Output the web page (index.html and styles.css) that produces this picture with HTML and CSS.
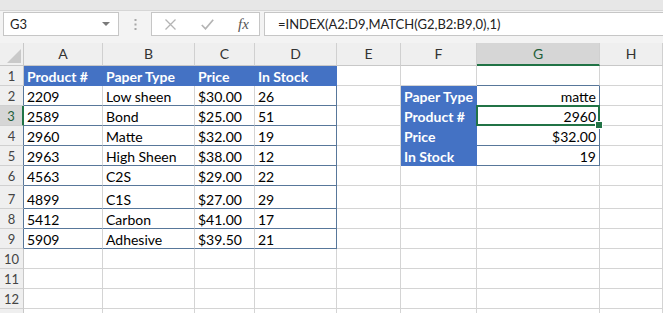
FILE: index.html
```html
<!DOCTYPE html>
<html lang="en">
<head>
    <meta charset="UTF-8">
    <title>INDEX MATCH lookup</title>
    <link rel="stylesheet" href="styles.css">
</head>
<body>
    <div class="ribbon-edge"></div>
    <div class="formula-bar">
        <div class="name-box"><span>G3</span><span class="caret"></span></div>
        <svg class="grip" width="3" height="11" viewBox="0 0 3 11">
            <rect x="0.5" y="0" width="2" height="2" fill="#a8a8a8"/>
            <rect x="0.5" y="4.5" width="2" height="2" fill="#a8a8a8"/>
            <rect x="0.5" y="9" width="2" height="2" fill="#a8a8a8"/>
        </svg>
        <div class="fx-box">
            <svg class="icon-x" width="11" height="11" viewBox="0 0 11 11">
                <path d="M0.5 0.5 L10.5 10.5 M10.5 0.5 L0.5 10.5" stroke="#b4b4b4" stroke-width="1.3" fill="none"/>
            </svg>
            <svg class="icon-ok" width="13" height="11" viewBox="0 0 13 11">
                <path d="M0.8 6 L4.5 9.8 L12.2 0.8" stroke="#b4b4b4" stroke-width="1.7" fill="none"/>
            </svg>
            <span class="fx">fx</span>
        </div>
        <div class="formula">=INDEX(A2:D9,MATCH(G2,B2:B9,0),1)</div>
    </div>

    <div class="sheet">
        <div class="corner">
            <svg width="14" height="14" viewBox="0 0 14 14"><path d="M14 0 L14 14 L0 14 Z" fill="#c9c9c9"/></svg>
        </div>
        <div class="ch">A</div><div class="ch">B</div><div class="ch">C</div><div class="ch">D</div>
        <div class="ch">E</div><div class="ch">F</div><div class="ch sel">G</div><div class="ch">H</div>

        <div class="rh">1</div>
        <div class="c th">Product #</div><div class="c th">Paper Type</div><div class="c th">Price</div><div class="c th">In Stock</div>
        <div class="c"></div><div class="c"></div><div class="c above"></div><div class="c"></div>

        <div class="rh edge">2</div>
        <div class="c tb">2209</div><div class="c tb">Low sheen</div><div class="c tb">$30.00</div><div class="c tb last">26</div>
        <div class="c"></div><div class="c lk">Paper Type</div><div class="c lv">matte</div><div class="c"></div>

        <div class="rh edge sel">3</div>
        <div class="c tb">2589</div><div class="c tb">Bond</div><div class="c tb">$25.00</div><div class="c tb last">51</div>
        <div class="c"></div><div class="c lk">Product #</div><div class="c lv active">2960</div><div class="c"></div>

        <div class="rh edge">4</div>
        <div class="c tb">2960</div><div class="c tb">Matte</div><div class="c tb">$32.00</div><div class="c tb last">19</div>
        <div class="c"></div><div class="c lk">Price</div><div class="c lv">$32.00</div><div class="c"></div>

        <div class="rh edge">5</div>
        <div class="c tb">2963</div><div class="c tb">High Sheen</div><div class="c tb">$38.00</div><div class="c tb last">12</div>
        <div class="c"></div><div class="c lk">In Stock</div><div class="c lv">19</div><div class="c"></div>

        <div class="rh edge">6</div>
        <div class="c tb">4563</div><div class="c tb">C2S</div><div class="c tb">$29.00</div><div class="c tb last">22</div>
        <div class="c"></div><div class="c"></div><div class="c"></div><div class="c"></div>

        <div class="rh edge">7</div>
        <div class="c tb">4899</div><div class="c tb">C1S</div><div class="c tb">$27.00</div><div class="c tb last">29</div>
        <div class="c"></div><div class="c"></div><div class="c"></div><div class="c"></div>

        <div class="rh edge">8</div>
        <div class="c tb">5412</div><div class="c tb">Carbon</div><div class="c tb">$41.00</div><div class="c tb last">17</div>
        <div class="c"></div><div class="c"></div><div class="c"></div><div class="c"></div>

        <div class="rh edge">9</div>
        <div class="c tb">5909</div><div class="c tb">Adhesive</div><div class="c tb">$39.50</div><div class="c tb last">21</div>
        <div class="c"></div><div class="c"></div><div class="c"></div><div class="c"></div>

        <div class="rh">10</div>
        <div class="c"></div><div class="c"></div><div class="c"></div><div class="c"></div>
        <div class="c"></div><div class="c"></div><div class="c"></div><div class="c"></div>

        <div class="rh">11</div>
        <div class="c"></div><div class="c"></div><div class="c"></div><div class="c"></div>
        <div class="c"></div><div class="c"></div><div class="c"></div><div class="c"></div>

        <div class="rh">12</div>
        <div class="c"></div><div class="c"></div><div class="c"></div><div class="c"></div>
        <div class="c"></div><div class="c"></div><div class="c"></div><div class="c"></div>

        <div class="rh"></div>
        <div class="c"></div><div class="c"></div><div class="c"></div><div class="c"></div>
        <div class="c"></div><div class="c"></div><div class="c"></div><div class="c"></div>
    </div>
</body>
</html>
```

FILE: styles.css
```css
* {
    box-sizing: border-box;
}
body {
    margin: 0;
    background-color: #f3f3f3;
    font-family: Lato, "Open Sans", sans-serif;
    color: #000;
    overflow: hidden;
    width: 663px;
    height: 313px;
}
.ribbon-edge {
    height: 11px;
    background-color: #e7e7e7;
    border-bottom: 1px solid #d6d6d6;
}
.formula-bar {
    display: flex;
    align-items: center;
    padding: 1px 0 7px 3px;
}
.name-box {
    width: 116px;
    height: 24px;
    background: #ffffff;
    border: 1px solid #c6c6c6;
    display: flex;
    align-items: center;
    justify-content: space-between;
    padding: 0 8px 0 6px;
    font-size: 13px;
    color: #222;
}
.caret {
    width: 0;
    height: 0;
    border-left: 4px solid transparent;
    border-right: 4px solid transparent;
    border-top: 4px solid #7a7a7a;
}
.grip {
    margin: 0 14px 0 15px;
}
.fx-box {
    width: 109px;
    height: 24px;
    background: #ffffff;
    border: 1px solid #c6c6c6;
    display: flex;
    align-items: center;
    padding-left: 13px;
}
.icon-ok {
    margin-left: 25px;
}
.fx {
    margin-left: 24px;
    font-family: "Liberation Serif", serif;
    font-style: italic;
    font-size: 15px;
    color: #555;
}
.formula {
    flex: 1;
    height: 24px;
    margin-left: 4px;
    background: #ffffff;
    border: 1px solid #c6c6c6;
    border-right: none;
    padding-left: 13px;
    font-size: 13px;
    line-height: 22px;
    color: #222;
}
.sheet {
    display: grid;
    grid-template-columns: 24px 79px 92px 60px 82px 64px 76px 123px 63px;
    grid-template-rows: 23px repeat(6, 20px) 23px repeat(6, 20px);
    background: #ffffff;
}
.corner {
    background: #efefef;
    border-right: 1px solid #c8c8c8;
    border-bottom: 1px solid #c8c8c8;
    display: flex;
    align-items: flex-end;
    justify-content: flex-end;
    padding: 0 2px 2px 0;
}
.ch {
    background: #efefef;
    border-right: 1px solid #d0d0d0;
    border-bottom: 1px solid #c8c8c8;
    text-align: center;
    font-size: 14px;
    line-height: 22px;
    color: #333;
}
.ch.sel {
    background: #d6d6d6;
    border-bottom: 2px solid #217346;
    color: #1f5f3a;
}
.rh {
    background: #efefef;
    border-right: 1px solid #c8c8c8;
    border-bottom: 1px solid #d0d0d0;
    text-align: center;
    font-size: 13px;
    display: flex;
    align-items: flex-end;
    justify-content: center;
    line-height: 17px;
    color: #444;
}
.rh.edge {
    border-right-color: #58779a;
}
.rh.sel {
    background: #d6d6d6;
    border-right: 2px solid #217346;
    color: #1f5f3a;
}
.c {
    border-right: 1px solid #d4d4d4;
    border-bottom: 1px solid #d4d4d4;
    display: flex;
    align-items: flex-end;
    padding: 0 3px;
    font-size: 14px;
    line-height: 17px;
    white-space: nowrap;
}
.c.th,
.c.lk {
    background: #4472c4;
    border-color: #4472c4;
    color: #ffffff;
    font-weight: bold;
}
.c.tb {
    border-bottom-color: #58779a;
}
.c.tb.last {
    border-right-color: #58779a;
}
.c.above {
    border-bottom-color: #58779a;
}
.c.lv {
    justify-content: flex-end;
    border-right-color: #58779a;
    border-bottom-color: #58779a;
}
.c.active {
    position: relative;
}
.c.active::before {
    content: "";
    position: absolute;
    left: -1px;
    top: -1px;
    right: -1px;
    bottom: -1px;
    border: 2px solid #217346;
}
.c.active::after {
    content: "";
    position: absolute;
    right: -4px;
    bottom: -4px;
    width: 6px;
    height: 6px;
    background: #217346;
    border: 1px solid #ffffff;
}
```
